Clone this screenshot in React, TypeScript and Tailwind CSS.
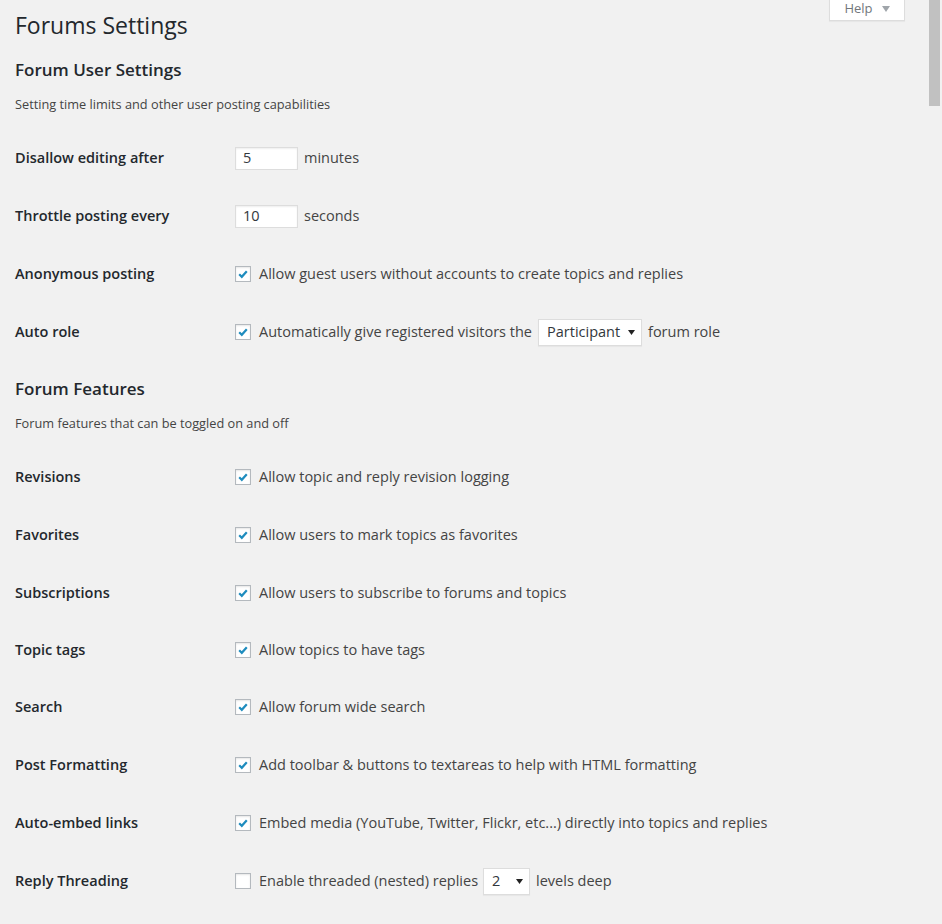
import React from 'react';

const font = { fontFamily: '"Open Sans", "Liberation Sans", sans-serif' };

function Check({ checked }: { checked: boolean }) {
  return (
    <span className="w-4 h-4 shrink-0 bg-white border border-[#b4b9be] shadow-[inset_0_1px_2px_rgba(0,0,0,0.1)] flex items-center justify-center">
      {checked && (
        <svg width="12" height="12" viewBox="0 0 12 12">
          <path d="M2.2 6.2 L4.8 8.8 L9.8 3.2" fill="none" stroke="#1e8cbe" strokeWidth="2.2" />
        </svg>
      )}
    </span>
  );
}

function TextBox({ value }: { value: string }) {
  return (
    <span className="w-[63px] h-[23px] bg-white border border-[#ddd] shadow-[inset_0_1px_2px_rgba(0,0,0,0.07)] flex items-center px-[7px] text-[14.5px] text-[#32373c]">
      {value}
    </span>
  );
}

function Select({ value, width }: { value: string; width: string }) {
  return (
    <span className={`${width} h-[27px] bg-white border border-[#ddd] shadow-[0_1px_1px_rgba(0,0,0,0.04)] flex items-center justify-between pl-[8px] pr-[6px] text-[14.5px] text-[#32373c]`}>
      <span>{value}</span>
      <svg width="7" height="5" viewBox="0 0 7 5">
        <path d="M0 0 L7 0 L3.5 5 Z" fill="#222" />
      </svg>
    </span>
  );
}

function Row({ label, h = 'h-[58px]', children }: { label: string; h?: string; children: React.ReactNode }) {
  return (
    <div className={`${h} flex items-center`}>
      <div className="w-[220px] text-[14.5px] font-semibold text-[#23282d]">{label}</div>
      <div className="flex items-center text-[14.5px] text-[#444]">{children}</div>
    </div>
  );
}

function CheckRow({ label, text, checked = true, h }: { label: string; text: string; checked?: boolean; h?: string }) {
  return (
    <Row label={label} h={h}>
      <Check checked={checked} />
      <span className="ml-2">{text}</span>
    </Row>
  );
}

export default function App() {
  return (
    <div className="relative min-h-[924px] bg-[#f1f1f1] overflow-hidden" style={font}>
      {/* help tab */}
      <div className="absolute top-[-4px] left-[829px] w-[76px] h-[25px] bg-white border border-[#ddd] shadow-[0_1px_1px_rgba(0,0,0,0.04)] flex items-center justify-center gap-[9px] text-[13px] text-[#72777c]">
        <span>Help</span>
        <svg width="8" height="6" viewBox="0 0 8 6">
          <path d="M0 0 L8 0 L4 6 Z" fill="#a0a5aa" />
        </svg>
      </div>
      {/* scrollbar thumb */}
      <div className="absolute top-0 left-[929px] w-[11px] h-[106px] bg-[#c1c1c1]" />

      <div className="pl-[15px]">
        <h1 className="h-[50px] flex items-center text-[23px] font-normal text-[#23282d]">Forums Settings</h1>
        <h2 className="h-[40px] flex items-center text-[17px] font-semibold text-[#23282d]">Forum User Settings</h2>
        <p className="h-[30px] flex items-center text-[12.75px] text-[#444]">Setting time limits and other user posting capabilities</p>

        <div className="mt-[9px]">
          <Row label="Disallow editing after">
            <TextBox value="5" />
            <span className="ml-[6px]">minutes</span>
          </Row>
          <Row label="Throttle posting every">
            <TextBox value="10" />
            <span className="ml-[6px]">seconds</span>
          </Row>
          <CheckRow label="Anonymous posting" text="Allow guest users without accounts to create topics and replies" />
          <Row label="Auto role">
            <Check checked />
            <span className="ml-2">Automatically give registered visitors the</span>
            <span className="ml-[6px]"><Select value="Participant" width="w-[104px]" /></span>
            <span className="ml-[6px]">forum role</span>
          </Row>
        </div>

        <h2 className="mt-[8px] h-[40px] flex items-center text-[17px] font-semibold text-[#23282d]">Forum Features</h2>
        <p className="h-[30px] flex items-center text-[12.75px] text-[#444]">Forum features that can be toggled on and off</p>

        <div className="mt-[9px]">
          <CheckRow label="Revisions" text="Allow topic and reply revision logging" />
          <CheckRow label="Favorites" text="Allow users to mark topics as favorites" />
          <CheckRow label="Subscriptions" text="Allow users to subscribe to forums and topics" />
          <CheckRow label="Topic tags" text="Allow topics to have tags" h="h-[56px]" />
          <CheckRow label="Search" text="Allow forum wide search" />
          <CheckRow label="Post Formatting" text="Add toolbar & buttons to textareas to help with HTML formatting" />
          <CheckRow label="Auto-embed links" text="Embed media (YouTube, Twitter, Flickr, etc...) directly into topics and replies" />
          <Row label="Reply Threading">
            <Check checked={false} />
            <span className="ml-2">Enable threaded (nested) replies</span>
            <span className="ml-[5px]"><Select value="2" width="w-[47px]" /></span>
            <span className="ml-[6px]">levels deep</span>
          </Row>
        </div>
      </div>
    </div>
  );
}
